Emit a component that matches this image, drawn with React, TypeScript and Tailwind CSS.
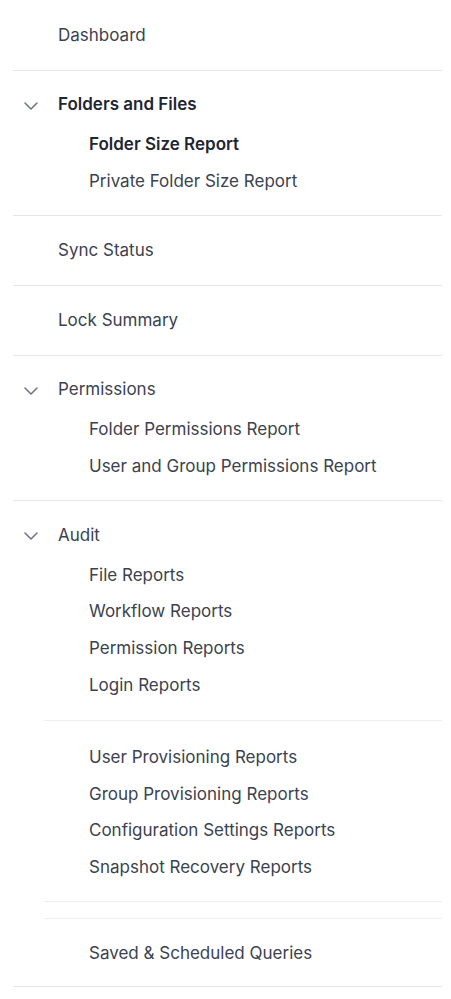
import React from 'react';
import { ChevronDown } from 'lucide-react';

type Item = { label: string; active?: boolean };

const Row = ({ label, active, indent }: Item & { indent?: boolean }) => (
  <div
    className={`flex h-[36.6px] items-center ${indent ? 'pl-[76px]' : 'pl-[45px]'} ${
      active ? 'font-semibold text-[#1f2633]' : 'text-[#3b4250]'
    }`}
  >
    {label}
  </div>
);

const Header = ({ label, bold }: { label: string; bold?: boolean }) => (
  <div className="relative flex h-[36.6px] items-center pl-[45px]">
    <ChevronDown size={24} strokeWidth={1.5} className="absolute left-[6px] top-[7px] text-[#6b7280]" />
    <span className={bold ? 'font-semibold text-[#1f2633]' : 'text-[#3b4250]'}>{label}</span>
  </div>
);

const Single = ({ label }: { label: string }) => (
  <div className="border-b border-[#e5e7eb] py-4">
    <Row label={label} />
  </div>
);

const Group = ({ label, bold, items }: { label: string; bold?: boolean; items: Item[] }) => (
  <div className="border-b border-[#e5e7eb] py-4">
    <Header label={label} bold={bold} />
    <div className="pt-[3px]">
      {items.map((it) => (
        <Row key={it.label} {...it} indent />
      ))}
    </div>
  </div>
);

const SubItem = ({ label }: { label: string }) => (
  <div className="flex h-[36.6px] items-center pl-[45px] text-[#3b4250]">{label}</div>
);

const auditGroups: string[][] = [
  ['File Reports', 'Workflow Reports', 'Permission Reports', 'Login Reports'],
  ['User Provisioning Reports', 'Group Provisioning Reports', 'Configuration Settings Reports', 'Snapshot Recovery Reports'],
];

export default function App() {
  return (
    <div className="min-h-screen bg-white font-['Inter',sans-serif] text-[17px] leading-none">
      <nav className="ml-[13px] w-[429px] pt-[1px]">
        <Single label="Dashboard" />
        <Group
          label="Folders and Files"
          bold
          items={[{ label: 'Folder Size Report', active: true }, { label: 'Private Folder Size Report' }]}
        />
        <Single label="Sync Status" />
        <Single label="Lock Summary" />
        <Group
          label="Permissions"
          items={[{ label: 'Folder Permissions Report' }, { label: 'User and Group Permissions Report' }]}
        />

        {/* Audit has nested sub-lists with their own dividers */}
        <div className="border-b border-[#e5e7eb] pt-4">
          <Header label="Audit" />
          <div className="ml-[31px]">
            <div className="border-b border-[#eceef1] pt-[3px] pb-[17px]">
              {auditGroups[0].map((l) => (
                <SubItem key={l} label={l} />
              ))}
            </div>
            <div className="border-b border-[#eceef1] pt-[18px] pb-[15px]">
              {auditGroups[1].map((l) => (
                <SubItem key={l} label={l} />
              ))}
            </div>
            <div className="h-[17px] border-b border-[#eceef1]" />
            <div className="pt-[17px] pb-[14px]">
              <SubItem label="Saved & Scheduled Queries" />
            </div>
          </div>
        </div>
      </nav>
    </div>
  );
}
